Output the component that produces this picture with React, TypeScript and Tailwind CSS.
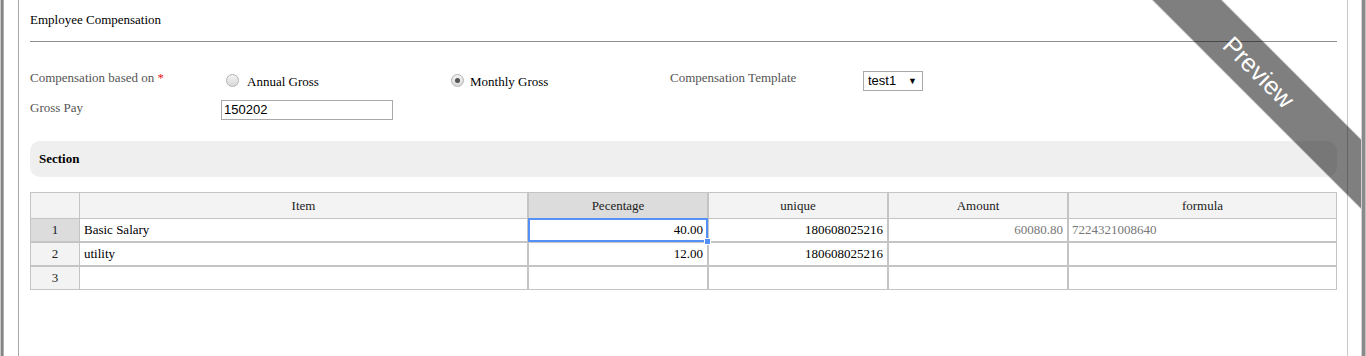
const colWidths = "grid-cols-[49px_449px_180px_180px_180px_268px]";
const colBorders = ["border-r", "border-r-2", "border-r-2", "border-r-2", "border-r-2", "border-r"];

const headers = ["", "Item", "Pecentage", "unique", "Amount", "formula"];

const rows = [
  { n: "1", item: "Basic Salary", pct: "40.00", unique: "180608025216", amount: "60080.80", formula: "7224321008640" },
  { n: "2", item: "utility", pct: "12.00", unique: "180608025216", amount: "", formula: "" },
  { n: "3", item: "", pct: "", unique: "", amount: "", formula: "" },
];

const rowBorders = ["border-b-2 h-[24px]", "border-b-2 h-[24px]", "border-b h-[23px]"];

function Radio({ checked }: { checked?: boolean }) {
  return (
    <span className="mt-[4px] flex h-[13px] w-[13px] shrink-0 items-center justify-center rounded-full border border-[#b2b2b2] bg-linear-to-b from-[#f3f3f3] to-[#d9d9d9]">
      {checked && <span className="h-[5px] w-[5px] rounded-full bg-[#555]" />}
    </span>
  );
}

function DataTable() {
  return (
    <div className="mt-[15px] border-l border-t border-[#c4c4c4]">
      <div className={`grid ${colWidths}`}>
        {headers.map((h, i) => (
          <div
            key={i}
            className={`flex h-[26px] items-center justify-center border-b border-[#c4c4c4] text-[#222] ${colBorders[i]} ${i === 2 ? "bg-[#dcdcdc]" : "bg-[#f3f3f3]"}`}
          >
            {h}
          </div>
        ))}
      </div>
      {rows.map((r, ri) => {
        const rb = rowBorders[ri];
        return (
          <div key={r.n} className={`grid ${colWidths}`}>
            <div className={`flex items-center justify-center border-[#c4c4c4] text-[#222] ${rb} ${colBorders[0]} ${ri === 0 ? "bg-[#dcdcdc]" : "bg-[#f3f3f3]"}`}>
              {r.n}
            </div>
            <div className={`flex items-center border-[#c4c4c4] px-[4px] ${rb} ${colBorders[1]}`}>{r.item}</div>
            <div className={`relative flex items-center justify-end border-[#c4c4c4] px-[4px] ${rb} ${colBorders[2]}`}>
              {r.pct}
              {ri === 0 && (
                <>
                  <span className="absolute -left-[1px] -top-[1px] h-[24px] w-[180px] border-2 border-[#5590f6]" />
                  <span className="absolute left-[175px] top-[19px] z-10 h-[7px] w-[7px] border border-white bg-[#5590f6]" />
                </>
              )}
            </div>
            <div className={`flex items-center justify-end border-[#c4c4c4] px-[4px] ${rb} ${colBorders[3]}`}>{r.unique}</div>
            <div className={`flex items-center justify-end border-[#c4c4c4] px-[4px] text-[#777] ${rb} ${colBorders[4]}`}>{r.amount}</div>
            <div className={`flex items-center border-[#c4c4c4] px-[3px] text-[#777] ${rb} ${colBorders[5]}`}>{r.formula}</div>
          </div>
        );
      })}
    </div>
  );
}

export default function App() {
  return (
    <div className="relative flex h-[356px] w-[1366px] overflow-hidden bg-white font-['Liberation_Serif',serif] text-[13px] leading-[16px] text-black">
      <div className="relative z-20 h-full w-[4px] border-l border-r border-l-[#c8c8c8] border-r-[#b0b0b0] bg-[#858585]" />

      <div className="ml-[14px] h-full w-[1330px] border-l border-r border-l-[#a8a8a8] border-r-[#c9c9c9] pl-[11px] pr-[10px]">
        <div className="pt-[12px]">Employee Compensation</div>
        <div className="mt-[13px] border-t border-[#8f8f8f]" />

        <div className="mt-[28px] flex h-[30px] items-start">
          <div className="w-[196px] text-[#555]">
            Compensation based on <span className="text-[#e0141e]">*</span>
          </div>
          <label className="flex w-[225px] items-start">
            <Radio />
            <span className="ml-[8px] mt-[4px]">Annual Gross</span>
          </label>
          <label className="flex w-[219px] items-start">
            <Radio checked />
            <span className="ml-[6px] mt-[4px]">Monthly Gross</span>
          </label>
          <div className="w-[193px] text-[#555]">Compensation Template</div>
          <div className="mt-[1px] flex h-[20px] w-[60px] items-center border border-[#a9a9a9] pl-[4px] font-['Liberation_Sans',sans-serif] text-[13px]">
            test1
            <span className="ml-auto mr-[5px] text-[9px]">▼</span>
          </div>
        </div>

        <div className="flex h-[20px] items-start">
          <div className="w-[191px] text-[#555]">Gross Pay</div>
          <div className="flex h-[20px] w-[172px] items-center border border-[#a9a9a9] pl-[2px] font-['Liberation_Sans',sans-serif] text-[13px]">
            150202
          </div>
        </div>

        <div className="mt-[21px] flex h-[36px] items-center rounded-[10px] bg-[#efefef] pl-[9px] font-bold">
          Section
        </div>

        <DataTable />
      </div>

      <div className="relative z-20 ml-[13px] h-full w-[5px] border-l border-r border-l-[#d0d0d0] border-r-[#c0c0c0] bg-[#8a8a8a]" />

      <div className="absolute left-[1009px] top-[48px] z-10 flex h-[48px] w-[500px] rotate-45 items-center justify-center bg-black/50 font-['Liberation_Sans',sans-serif] text-[25px] text-white shadow-[0_0_0_1px_rgba(0,0,0,0.18)]">
        Preview
      </div>
    </div>
  );
}
